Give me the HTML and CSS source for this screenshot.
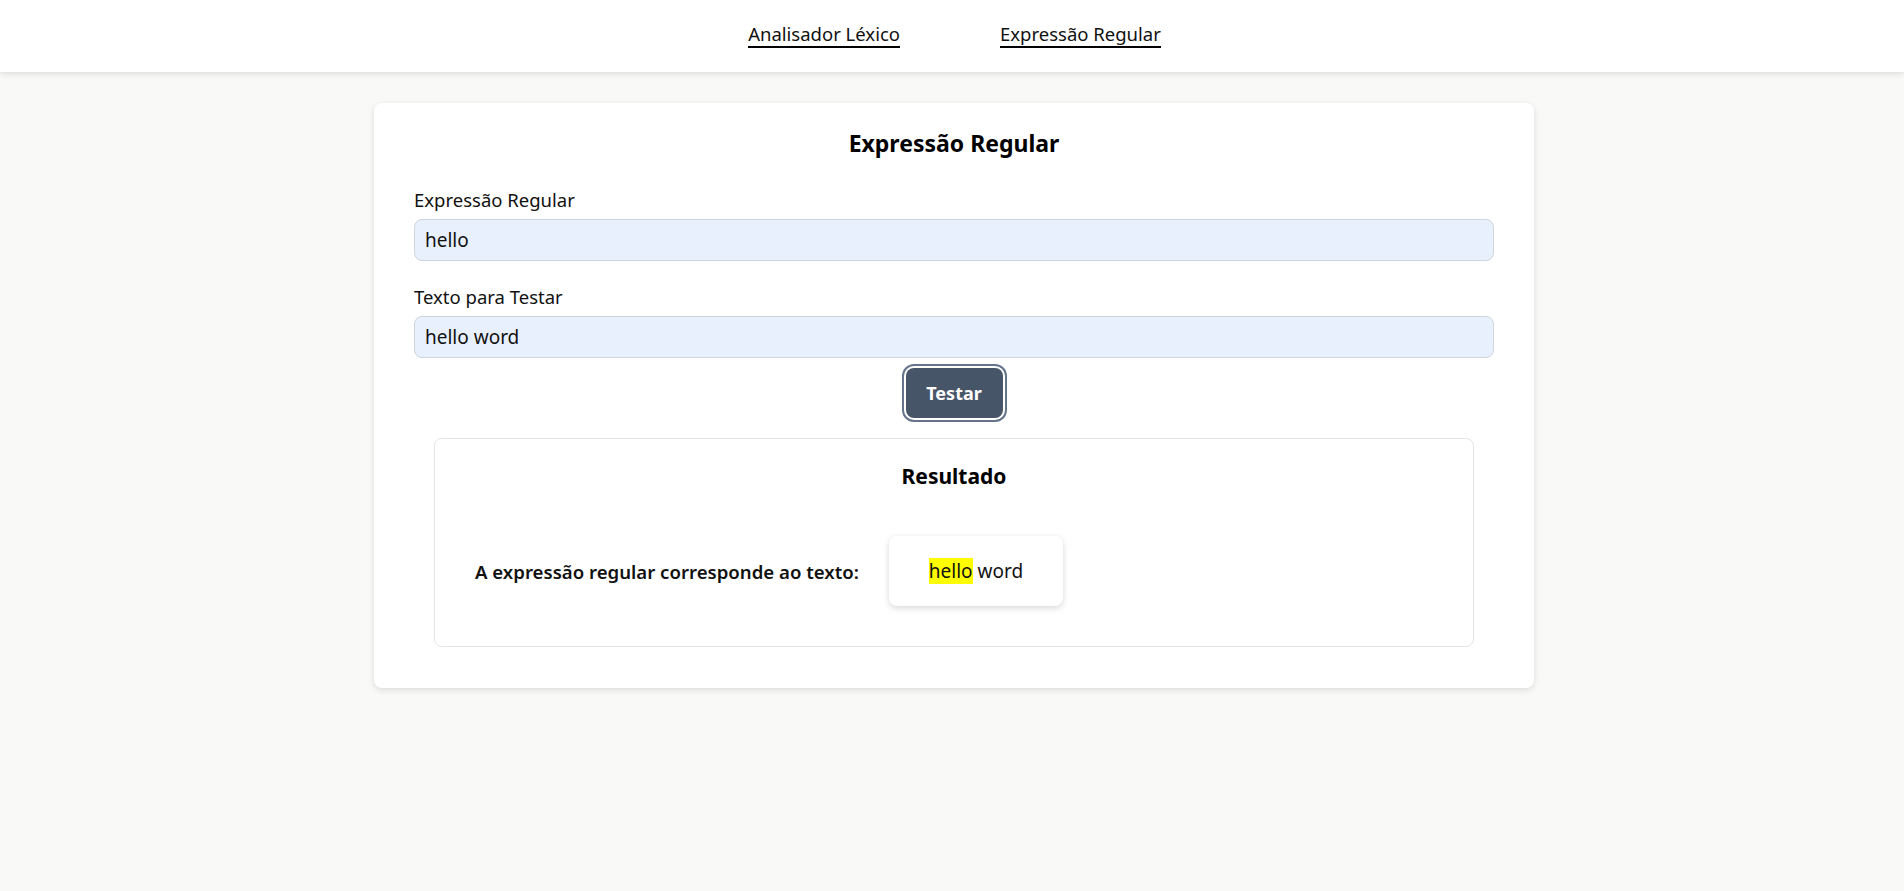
FILE: index.html
```html
<!DOCTYPE html>
<html lang="pt">
<head>
<meta charset="utf-8">
<title>Expressão Regular</title>
<link rel="stylesheet" href="styles.css">
</head>
<body>
<header class="topbar">
  <nav class="nav">
    <a class="nav-link" href="#">Analisador Léxico</a>
    <a class="nav-link" href="#">Expressão Regular</a>
  </nav>
</header>
<main class="page">
  <section class="card">
    <h2 class="card-title">Expressão Regular</h2>
    <form class="form">
      <label class="field-label" for="regex">Expressão Regular</label>
      <input class="field-input" id="regex" type="text" value="hello">
      <label class="field-label second" for="texto">Texto para Testar</label>
      <input class="field-input" id="texto" type="text" value="hello word">
      <div class="actions">
        <button class="btn" type="button">Testar</button>
      </div>
    </form>
    <div class="result">
      <h3 class="result-title">Resultado</h3>
      <div class="result-row">
        <span class="result-label">A expressão regular corresponde ao texto:</span>
        <div class="match-box"><mark class="hl">hello</mark> word</div>
      </div>
    </div>
  </section>
</main>
</body>
</html>
```

FILE: styles.css
```css
* { box-sizing: border-box; }

html, body { margin: 0; padding: 0; }

body {
  font-family: "Noto Sans", "Open Sans", sans-serif;
  font-size: 18.5px;
  color: #111;
  background: #f9f9f8;
  min-height: 891px;
}

.topbar {
  height: 72px;
  background: #fff;
  box-shadow: 0 2px 6px rgba(0, 0, 0, 0.12);
  display: flex;
  align-items: center;
  justify-content: center;
  padding-left: 5px;
}

.nav {
  display: flex;
  gap: 100px;
  margin-bottom: 2px;
}

.nav-link {
  color: #111;
  text-decoration: none;
  font-size: 18.5px;
  line-height: 22px;
  border-bottom: 2.5px solid #000;
  padding-bottom: 1px;
}

.page {
  display: flex;
  justify-content: center;
  padding: 31px 0 0 4px;
}

.card {
  width: 1160px;
  background: #fff;
  border-radius: 8px;
  box-shadow: 0 2px 6px rgba(0, 0, 0, 0.12);
  padding: 25px 40px 41px;
}

.card-title {
  margin: 0 0 30px;
  text-align: center;
  font-size: 23px;
  line-height: 30px;
  font-weight: 700;
  color: #000;
}

.form {
  display: flex;
  flex-direction: column;
}

.field-label {
  font-size: 18.5px;
  line-height: 24px;
  margin-bottom: 7px;
  color: #111;
}

.field-label.second { margin-top: 24px; }

.field-input {
  height: 42px;
  border: 1px solid #cfd5de;
  border-radius: 8px;
  background: #e8f0fe;
  padding: 0 10px;
  font-family: inherit;
  font-size: 19px;
  color: #111;
  outline: none;
}

.actions {
  display: flex;
  justify-content: center;
  margin-top: 10px;
}

.btn {
  width: 97px;
  height: 50px;
  border: none;
  border-radius: 8px;
  background: #475569;
  color: #fff;
  font-family: inherit;
  font-size: 18px;
  font-weight: 700;
  box-shadow: 0 0 0 2px #fff, 0 0 0 4px #64748b;
  cursor: pointer;
}

.result {
  margin: 20px 20px 0;
  border: 1px solid #e5e5e5;
  border-radius: 8px;
  padding: 24px 40px 40px;
}

.result-title {
  margin: 0 0 46px;
  text-align: center;
  font-size: 21px;
  line-height: 27px;
  font-weight: 700;
  color: #000;
}

.result-row {
  display: flex;
  align-items: center;
  gap: 30px;
}

.result-label {
  font-weight: 600;
  font-size: 18.6px;
  color: #111;
}

.match-box {
  background: #fff;
  border-radius: 8px;
  box-shadow: 0 2px 6px rgba(0, 0, 0, 0.16);
  padding: 21px 40px;
  font-size: 19px;
  line-height: 28px;
  color: #111;
}

.hl {
  background: #ffff00;
  color: #111;
  padding: 0;
}
```
